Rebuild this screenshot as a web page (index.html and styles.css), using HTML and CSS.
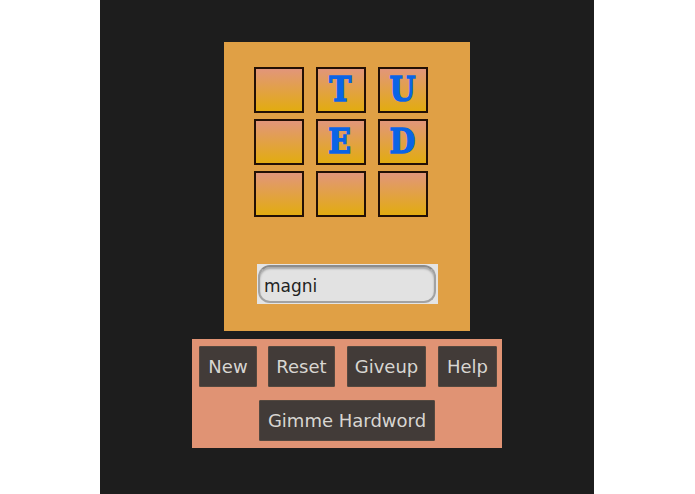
FILE: index.html
```html
<!DOCTYPE html>
<html lang="en">
    <head>
        <meta charset="UTF-8" />
        <title>Word Game</title>
        <link rel="stylesheet" href="styles.css">
    </head>
    <body>
        <div class="wrap">
            <div class="game">
                <div class="board">
                    <div class="tile"></div>
                    <div class="tile"><span class="letter">T</span></div>
                    <div class="tile"><span class="letter">U</span></div>
                    <div class="tile"></div>
                    <div class="tile"><span class="letter">E</span></div>
                    <div class="tile"><span class="letter">D</span></div>
                    <div class="tile"></div>
                    <div class="tile"></div>
                    <div class="tile"></div>
                </div>
                <div class="guess-box">
                    <input type="text" class="guess" value="magni" />
                </div>
            </div>
            <div class="controls">
                <div class="row row-main">
                    <button type="button" class="btn btn-new">New</button>
                    <button type="button" class="btn btn-reset">Reset</button>
                    <button type="button" class="btn btn-giveup">Giveup</button>
                    <button type="button" class="btn btn-help">Help</button>
                </div>
                <div class="row">
                    <button type="button" class="btn btn-hard">Gimme Hardword</button>
                </div>
            </div>
        </div>
    </body>
</html>
```

FILE: styles.css
```css
body {
    margin: 0;
    background-color: #fff;
    font-family: "DejaVu Sans", sans-serif;
}
.wrap {
    width: 494px;
    height: 494px;
    margin-left: 100px;
    padding-top: 42px;
    box-sizing: border-box;
    background-color: #1d1d1d;
    display: flex;
    flex-direction: column;
    align-items: center;
}
.game {
    width: 246px;
    height: 289px;
    box-sizing: border-box;
    padding: 25px 0 0 30px;
    background-color: #e0a045;
}
.board {
    display: grid;
    grid-template-columns: repeat(3, 50px);
    grid-auto-rows: 46px;
    column-gap: 12px;
    row-gap: 6px;
}
.tile {
    box-sizing: border-box;
    padding-right: 2px;
    border: 2px solid #231005;
    background: linear-gradient(#e2967a, #e2ac10);
    color: #0a64e6;
    font-family: "DejaVu Serif", serif;
    font-weight: bold;
    font-size: 33px;
    line-height: 41px;
    text-align: center;
    -webkit-text-stroke: 1.5px #0a64e6;
}
.letter {
    display: inline-block;
    transform: scale(0.9, 1.04);
}
.guess-box {
    width: 181px;
    height: 40px;
    margin: 47px 0 0 3px;
    padding: 1px 2px 1px 1px;
    box-sizing: border-box;
    background-color: #e4e4e4;
}
.guess {
    display: block;
    width: 100%;
    height: 100%;
    padding: 3px 4px 0;
    box-sizing: border-box;
    border: 2px solid #a2a2a2;
    border-top-color: #8c8c8c;
    border-radius: 12px;
    outline: none;
    background-color: #e2e2e2;
    box-shadow: inset 0 2px 2px #a8a8a8;
    color: #222;
    font-family: "DejaVu Sans", sans-serif;
    font-size: 17px;
}
.controls {
    width: 310px;
    height: 109px;
    margin-top: 8px;
    box-sizing: border-box;
    padding-top: 7px;
    background-color: #e09374;
    display: flex;
    flex-direction: column;
    gap: 13px;
}
.row {
    display: flex;
    justify-content: center;
    gap: 12px;
}
.row-main {
    padding-left: 2px;
}
.btn {
    height: 41px;
    padding: 0;
    border: 1px solid #54483f;
    border-radius: 1px;
    background-color: #423b38;
    color: #d8d6d2;
    font-family: "DejaVu Sans", sans-serif;
    font-size: 18px;
}
.btn-new { width: 58px; margin-right: -1px; }
.btn-reset { width: 67px; }
.btn-giveup { width: 79px; }
.btn-help { width: 59px; }
.btn-hard { width: 176px; }
```
